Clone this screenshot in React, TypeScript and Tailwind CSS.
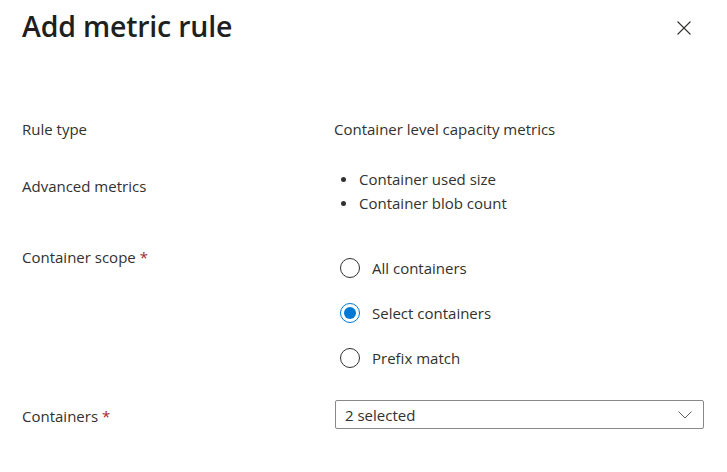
import React from "react";

const font = { fontFamily: '"Open Sans", "Noto Sans", sans-serif' };

function Radio({ label, checked }: { label: string; checked?: boolean }) {
  return (
    <div className="flex items-center h-[22px]">
      <span
        className={`w-[20px] h-[20px] rounded-full border flex items-center justify-center ml-[5px] ${
          checked ? "border-[#0078d4]" : "border-[#323130]"
        }`}
      >
        {checked && <span className="w-[12px] h-[12px] rounded-full bg-[#0078d4]" />}
      </span>
      <span className="ml-[12px] text-[15px] text-[#323130]">{label}</span>
    </div>
  );
}

export default function App() {
  return (
    <div className="w-[727px] h-[472px] bg-white text-[#323130] overflow-hidden" style={font}>
      <div className="flex items-start justify-between pl-[22px] pr-[29px] pt-[6px]">
        <h1 className="text-[28.5px] font-semibold text-[#201f1e] leading-[40px] tracking-[-0.2px]">Add metric rule</h1>
        <button className="mt-[8px] w-[28px] h-[28px] flex items-center justify-center text-[#323130]">
          <svg width="16" height="16" viewBox="0 0 16 16" fill="none" stroke="currentColor" strokeWidth="1.1">
            <path d="M1.5 1.5 L14.5 14.5 M14.5 1.5 L1.5 14.5" />
          </svg>
        </button>
      </div>

      <div className="grid grid-cols-[313px_1fr] pl-[22px] pr-[23px] mt-[71px] text-[15px] leading-[24px]">
        <div>Rule type</div>
        <div className="-ml-px">Container level capacity metrics</div>

        <div className="mt-[33px]">Advanced metrics</div>
        <ul className="mt-[26px]">
          <li className="flex items-center">
            <span className="w-[5px] h-[5px] rounded-full bg-[#323130] ml-[6px] mr-[13px]" />
            Container used size
          </li>
          <li className="flex items-center">
            <span className="w-[5px] h-[5px] rounded-full bg-[#323130] ml-[6px] mr-[13px]" />
            Container blob count
          </li>
        </ul>

        <div className="mt-[30px]">
          Container scope <span className="text-[#a4262c]">*</span>
        </div>
        <div className="mt-[42px] flex flex-col gap-[23px]">
          <Radio label="All containers" />
          <Radio label="Select containers" checked />
          <Radio label="Prefix match" />
        </div>

        <div className="mt-[35px]">
          Containers <span className="text-[#a4262c]">*</span>
        </div>
        <div className="mt-[31px] h-[29px] border border-[#8a8886] rounded-[2px] flex items-center justify-between pl-[9px] pr-[11px]">
          <span>2 selected</span>
          <svg width="14" height="8" viewBox="0 0 14 8" fill="none" stroke="#605e5c" strokeWidth="1">
            <path d="M0.5 0.5 L7 7 L13.5 0.5" />
          </svg>
        </div>
      </div>
    </div>
  );
}
